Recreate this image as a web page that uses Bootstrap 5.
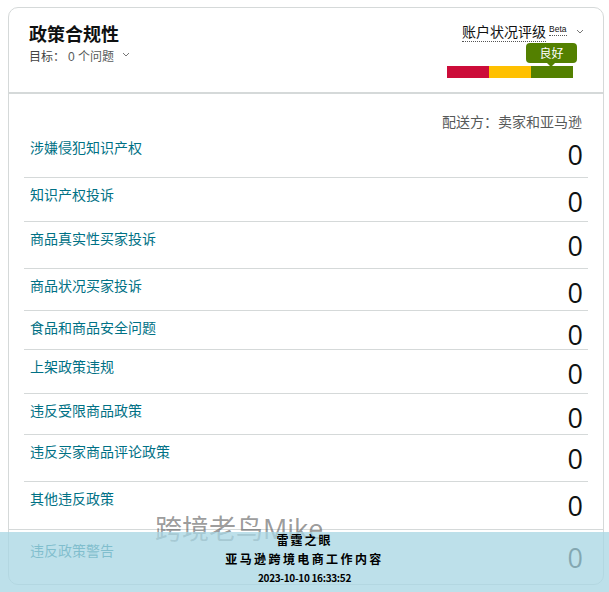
<!DOCTYPE html>
<html lang="zh">
<head>
<meta charset="utf-8">
<title>政策合规性</title>
<link href="https://cdn.jsdelivr.net/npm/bootstrap@5.3.0/dist/css/bootstrap.min.css" rel="stylesheet">
<style>
html,body{height:592px;overflow:hidden;background:#fff}
body{font-family:"Liberation Sans","Noto Sans CJK SC",sans-serif;font-size:13px;color:#111;position:relative;padding:7px 5px 0 8px}
.shell{border:1px solid #d5d9d9;border-radius:10px;height:578px;overflow:hidden}
.head{height:86px;border-bottom:2px solid #d5d9d9;padding:14px 30px 0 20px}
.ttl{font-size:18px;font-weight:700;line-height:26px;color:#0f1111}
.goal{font-size:12px;line-height:18px;color:#565959}
.goal b{font-weight:400;color:#444;margin-right:3px}
.chev{width:8px;height:5px;display:inline-block;vertical-align:4px;margin-left:8px}
.rate{width:126px;position:relative;padding-top:1px}
.rate-t{font-size:14px;line-height:20px;white-space:nowrap;margin-left:15px;display:flex;align-items:flex-start}
.rate-t span{border-bottom:1px dotted #555;line-height:18px}
.rate-t sup{font-size:8.5px;line-height:11px;border-bottom:1px dotted #555;margin-left:3px;position:static;height:12px;margin-top:1px}
.rate-t .chev{margin:6px 0 0 9px;flex:none}
.bars{display:flex;height:12px;margin-top:24px}
.bars i{flex:1}
.rb1{background:#cc0c39}.rb2{background:#ffc000}.rb3{background:#538000}
.tip{position:absolute;left:79px;top:21px;width:51px;height:20px;border-radius:4px;background:#538000;color:#fff;font-size:12px;line-height:22px;text-align:center}
.tip::after{content:"";position:absolute;left:21px;top:20px;border:4px solid transparent;border-top-color:#538000;border-bottom:0}
.ship{font-size:14px;line-height:18px;color:#565959;text-align:right;padding:19px 21px 0 0;height:37px}
.rows{padding:0 15px}
.item{display:flex;justify-content:space-between;border-bottom:1px solid #d5d9d9;padding:7px 5px 0 6px;box-sizing:content-box}
.item a{color:#007185;text-decoration:none;font-size:14px;line-height:21px}
.item em{font-style:normal;font-size:27px;line-height:31px;color:#0f1111;margin-top:1px;font-family:"Open Sans",sans-serif;font-weight:400}
.item:nth-child(1){height:39px}.item:nth-child(2){height:36px}.item:nth-child(3){height:39px}
.item:nth-child(4){height:34px}.item:nth-child(5){height:31px}.item:nth-child(6){height:36px}
.item:nth-child(7){height:33px}.item:nth-child(8){height:39px}.item:nth-child(9){height:40px;margin:0 -15px;padding-left:21px;padding-right:20px}
.item:nth-child(10){border:0;height:40px;padding-top:11px}
.veil{position:absolute;left:0;right:0;top:532px;height:60px;background:rgba(168,214,227,.76);text-align:center;font-family:"Noto Sans CJK JP","Noto Sans CJK SC",sans-serif;color:#000}
.wmark{position:absolute;left:155px;top:511px;font-size:27px;line-height:36px;color:rgba(90,90,90,.62);font-family:"Open Sans","Noto Sans CJK SC",sans-serif;white-space:nowrap}
.v1{font-size:12px;line-height:16px;font-weight:700;letter-spacing:2px}
.v2{font-size:12px;line-height:18px;font-weight:700;letter-spacing:2.4px;margin-top:2px}
.v3{font-size:10px;line-height:14px;font-weight:700;margin-top:3px;letter-spacing:-.3px}
</style>
</head>
<body>
<div class="shell">
  <div class="head d-flex justify-content-between">
    <div>
      <div class="ttl">政策合规性</div>
      <div class="goal"><b>目标：</b>0 个问题<svg class="chev" viewBox="0 0 8 5"><path d="M1 1l3 3 3-3" fill="none" stroke="#777" stroke-width="1"/></svg></div>
    </div>
    <div class="rate">
      <div class="rate-t"><span>账户状况评级</span><sup>Beta</sup><svg class="chev" viewBox="0 0 8 5"><path d="M1 1l3 3 3-3" fill="none" stroke="#777" stroke-width="1"/></svg></div>
      <div class="tip">良好</div>
      <div class="bars"><i class="rb1"></i><i class="rb2"></i><i class="rb3"></i></div>
    </div>
  </div>
  <div class="ship">配送方：卖家和亚马逊</div>
  <div class="rows">
    <div class="item"><a href="#">涉嫌侵犯知识产权</a><em>0</em></div>
    <div class="item"><a href="#">知识产权投诉</a><em>0</em></div>
    <div class="item"><a href="#">商品真实性买家投诉</a><em>0</em></div>
    <div class="item"><a href="#">商品状况买家投诉</a><em>0</em></div>
    <div class="item"><a href="#">食品和商品安全问题</a><em>0</em></div>
    <div class="item"><a href="#">上架政策违规</a><em>0</em></div>
    <div class="item"><a href="#">违反受限商品政策</a><em>0</em></div>
    <div class="item"><a href="#">违反买家商品评论政策</a><em>0</em></div>
    <div class="item"><a href="#">其他违反政策</a><em>0</em></div>
    <div class="item"><a href="#">违反政策警告</a><em>0</em></div>
  </div>
</div>
<div class="wmark">跨境老鸟Mike</div>
<div class="veil">
  <div class="v1">雷霆之眼</div>
  <div class="v2">亚马逊跨境电商工作内容</div>
  <div class="v3">2023-10-10 16:33:52</div>
</div>
<script src="https://cdn.jsdelivr.net/npm/bootstrap@5.3.0/dist/js/bootstrap.bundle.min.js"></script>
</body>
</html>
